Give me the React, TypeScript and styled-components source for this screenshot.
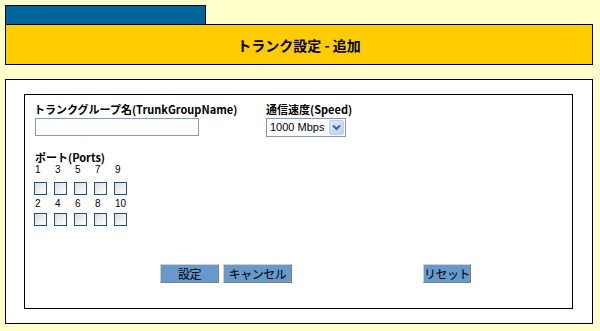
import { createGlobalStyle } from 'styled-components'
import styled from 'styled-components'

const GlobalStyle = createGlobalStyle`
  body {
    margin: 0;
    background: #ffffcc;
    font-family: "Noto Sans CJK JP", "Liberation Sans", sans-serif;
    color: #000;
  }
`

const Page = styled.div`
  padding: 5px 7px 0 5px;
`

const Tab = styled.div`
  width: 199px;
  height: 18px;
  background: #006699;
  border: 1px solid #000;
  border-bottom: none;
`

const Header = styled.div`
  height: 39px;
  background: #ffcc00;
  border: 1px solid #000;
  display: flex;
  align-items: center;
  justify-content: center;
  font-size: 14px;
  font-weight: bold;
  white-space: pre;
`

const OuterBox = styled.div`
  box-sizing: border-box;
  margin-top: 14px;
  height: 245px;
  background: #fff;
  border: 1px solid #000;
  padding: 14px 19px 0 18px;
`

const InnerBox = styled.div`
  box-sizing: border-box;
  height: 215px;
  border: 1px solid #000;
  padding: 8px 0 0 9px;
  overflow: hidden;
`

const FieldRow = styled.div`
  display: flex;
`

const Field = styled.div<{ $width: number }>`
  width: ${(p) => p.$width}px;
  display: flex;
  flex-direction: column;
`

const Label = styled.div`
  font-size: 11px;
  font-weight: bold;
  line-height: 13px;
  height: 15px;
  white-space: nowrap;
`

const TextBox = styled.input`
  box-sizing: border-box;
  width: 164px;
  height: 18px;
  margin: 0 0 0 1px;
  border: 1px solid #7f9db9;
  padding: 0 3px;
  font-size: 12px;
  outline: none;
`

const SelectBox = styled.div`
  box-sizing: border-box;
  width: 80px;
  height: 19px;
  border: 1px solid #7f9db9;
  display: flex;
  align-items: center;
  justify-content: space-between;
  padding: 1px 1px 1px 3px;
  font-family: "Liberation Sans", sans-serif;
  font-size: 11px;
  line-height: 15px;
  white-space: nowrap;
`

const SelectArrow = styled.span`
  box-sizing: border-box;
  width: 15px;
  height: 15px;
  border: 1px solid #b9cdf5;
  border-radius: 2px;
  background: linear-gradient(135deg, #dfe8fd, #bccef8);
  display: flex;
  align-items: center;
  justify-content: center;
`

const PortsLabel = styled(Label)`
  margin-top: 14px;
  margin-left: 1px;
  height: 13px;
`

const PortGrid = styled.div`
  display: grid;
  grid-template-columns: repeat(5, 20px);
`

const PortNum = styled.div<{ $gap: number }>`
  font-size: 10px;
  line-height: 11px;
  height: 11px;
  padding-left: 1px;
  margin-bottom: ${(p) => p.$gap}px;
  font-family: "Liberation Sans", sans-serif;
`

const Check = styled.span<{ $gap: number }>`
  box-sizing: border-box;
  display: block;
  width: 13px;
  height: 13px;
  border: 1px solid #1c5180;
  background: linear-gradient(135deg, #dcdcd7, #ffffff);
  margin-bottom: ${(p) => p.$gap}px;
`

const ButtonRow = styled.div`
  display: flex;
  margin-top: 38px;
  margin-left: 126px;
`

const Button = styled.button<{ $width: number; $offset?: number }>`
  box-sizing: border-box;
  width: ${(p) => p.$width}px;
  height: 19px;
  margin-left: ${(p) => p.$offset ?? 0}px;
  padding: 0;
  background: #6699cc;
  border: 1px solid;
  border-color: #d4d0c8 #808070 #808070 #d4d0c8;
  font-family: "Noto Sans CJK JP", sans-serif;
  font-size: 12px;
  line-height: 17px;
  letter-spacing: -0.5px;
  white-space: nowrap;
  color: #000;
`

const oddPorts = [1, 3, 5, 7, 9]
const evenPorts = [2, 4, 6, 8, 10]

export default function App() {
  return (
    <>
      <GlobalStyle />
      <Page>
        <Tab />
        <Header>トランク設定 - 追加</Header>
        <OuterBox>
          <InnerBox>
            <FieldRow>
              <Field $width={232}>
                <Label>トランクグループ名(TrunkGroupName)</Label>
                <TextBox type="text" />
              </Field>
              <Field $width={120}>
                <Label>通信速度(Speed)</Label>
                <SelectBox>
                  <span>1000 Mbps</span>
                  <SelectArrow>
                    <svg width="9" height="7" viewBox="0 0 9 7">
                      <path d="M1 1.5 L4.5 5 L8 1.5" fill="none" stroke="#4d6185" strokeWidth="2" />
                    </svg>
                  </SelectArrow>
                </SelectBox>
              </Field>
            </FieldRow>
            <PortsLabel>ポート(Ports)</PortsLabel>
            <PortGrid>
              {oddPorts.map((n) => (
                <PortNum key={n} $gap={7}>{n}</PortNum>
              ))}
              {oddPorts.map((n) => (
                <Check key={'c' + n} $gap={3} />
              ))}
              {evenPorts.map((n) => (
                <PortNum key={n} $gap={4}>{n}</PortNum>
              ))}
              {evenPorts.map((n) => (
                <Check key={'c' + n} $gap={0} />
              ))}
            </PortGrid>
            <ButtonRow>
              <Button $width={59}>設定</Button>
              <Button $width={69} $offset={4}>キャンセル</Button>
              <Button $width={48} $offset={131}>リセット</Button>
            </ButtonRow>
          </InnerBox>
        </OuterBox>
      </Page>
    </>
  )
}
